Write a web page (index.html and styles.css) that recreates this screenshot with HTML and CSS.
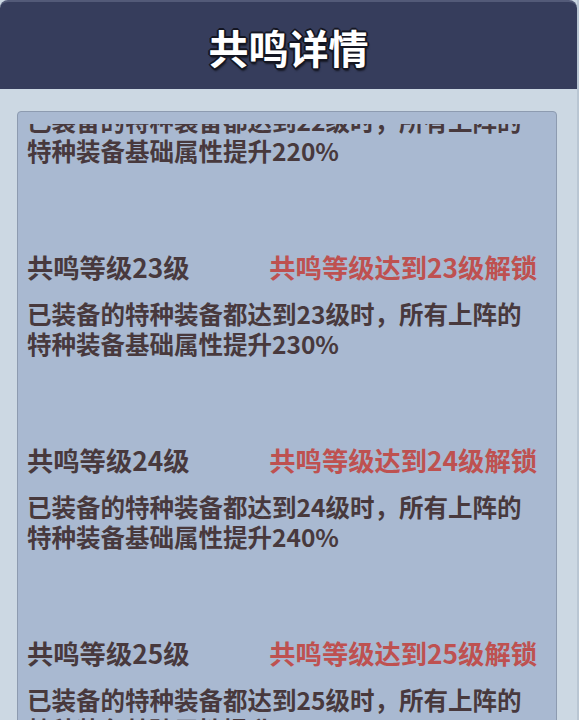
FILE: index.html
```html
<!DOCTYPE html>
<html>
<head>
    <meta charset="utf-8" />
    <title>共鸣详情</title>
    <meta name="viewport" content="width=device-width, initial-scale=1" />
    <link rel="stylesheet" href="styles.css">
</head>
<body>
    <div class="dialog">
        <div class="dlg-head">
            <h3>共鸣详情</h3>
        </div>
        <div class="dlg-body">
            <div class="panel">
                <div class="scroller">
                    <div class="list">
                        <div class="entry">
                            <div class="entry-top">
                                <span class="lvl">共鸣等级22级</span>
                                <span class="lock">共鸣等级达到22级解锁</span>
                            </div>
                            <p class="desc">已装备的特种装备都达到22级时，所有上阵的<br />特种装备基础属性提升220%</p>
                        </div>
                        <div class="entry">
                            <div class="entry-top">
                                <span class="lvl">共鸣等级23级</span>
                                <span class="lock">共鸣等级达到23级解锁</span>
                            </div>
                            <p class="desc">已装备的特种装备都达到23级时，所有上阵的<br />特种装备基础属性提升230%</p>
                        </div>
                        <div class="entry">
                            <div class="entry-top">
                                <span class="lvl">共鸣等级24级</span>
                                <span class="lock">共鸣等级达到24级解锁</span>
                            </div>
                            <p class="desc">已装备的特种装备都达到24级时，所有上阵的<br />特种装备基础属性提升240%</p>
                        </div>
                        <div class="entry">
                            <div class="entry-top">
                                <span class="lvl">共鸣等级25级</span>
                                <span class="lock">共鸣等级达到25级解锁</span>
                            </div>
                            <p class="desc">已装备的特种装备都达到25级时，所有上阵的<br />特种装备基础属性提升250%</p>
                        </div>
                    </div>
                </div>
            </div>
        </div>
    </div>
</body>
</html>
```

FILE: styles.css
```css
html, body {
    margin: 0;
    height: 100%;
    overflow: hidden;
}

body {
    font-family: "Noto Sans CJK SC", "Noto Sans", sans-serif;
    background-color: #ccd8e3;
}

.dialog {
    height: 720px;
    display: flex;
    flex-direction: column;
    border-right: 2px solid #b9c6d3;
    box-sizing: border-box;
}

.dlg-head {
    height: 89px;
    flex: none;
    background-color: #363d5c;
    border-top: 2px solid #535a78;
    border-radius: 8px 8px 0 0;
    box-sizing: border-box;
    display: flex;
    align-items: center;
    justify-content: center;
}

.dlg-head h3 {
    margin: 0;
    padding-top: 2px;
    color: #fff;
    font-size: 40px;
    font-weight: 700;
    line-height: 1;
    text-shadow: -2px 0 #141622, 2px 0 #141622, 0 -2px #141622, 0 2px #141622,
        -1px -1px #141622, 1px 1px #141622, -1px 1px #141622, 1px -1px #141622,
        1px 3px 2px rgba(0, 0, 0, 0.6);
}

.dlg-body {
    flex: 1;
    padding: 22px 20px 0 17px;
}

.panel {
    height: 700px;
    background-color: #a9b9d1;
    border: 1px solid #8d9bb0;
    border-radius: 4px;
    padding-top: 12px;
    box-sizing: border-box;
}

.scroller {
    height: 100%;
    overflow: hidden;
}

/* list is scrolled down a bit, first row sits above the fold */
.list {
    margin-top: -70px;
    padding: 0 19px 0 9px;
}

.entry {
    height: 193px;
    color: #48393d;
}

.entry-top {
    display: flex;
    justify-content: space-between;
    align-items: center;
    height: 40px;
    font-size: 26.3px;
    font-weight: 700;
    line-height: 40px;
}

.lock {
    color: #be5150;
}

.desc {
    margin: 12px 0 0;
    font-size: 24.5px;
    font-weight: 700;
    line-height: 30px;
}
```
